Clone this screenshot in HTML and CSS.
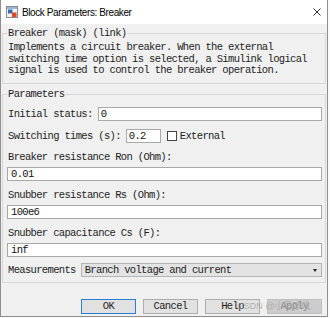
FILE: index.html
```html
<!DOCTYPE html>
<html lang="en">
<head>
    <meta charset="UTF-8">
    <meta name="viewport" content="width=device-width, initial-scale=1.0">
    <title>Block Parameters: Breaker</title>
    <link rel="stylesheet" href="styles.css">
</head>
<body>
    <div class="window">
        <div class="titlebar">
            <svg class="app-icon" width="12" height="12" viewBox="0 0 12 12">
                <rect x="0.5" y="0.5" width="11" height="11" fill="#f2f2f2" stroke="#8c8c8c"/>
                <rect x="1" y="1" width="10" height="2" fill="#9bb7d6"/>
                <rect x="2" y="3.5" width="4.5" height="4" fill="#2f6db5"/>
                <rect x="6" y="6.5" width="4.5" height="4.5" fill="#e2452a"/>
            </svg>
            <span class="title">Block Parameters: Breaker</span>
            <svg class="close" width="8" height="8" viewBox="0 0 8 8">
                <path d="M0.5 0.5 L7.5 7.5 M7.5 0.5 L0.5 7.5" stroke="#333" stroke-width="1"/>
            </svg>
        </div>

        <div class="content">
            <fieldset class="group">
                <legend>Breaker (mask) (link)</legend>
                <p class="desc">Implements a circuit breaker. When the external<br>switching time option is selected, a Simulink logical<br>signal is used to control the breaker operation.</p>
            </fieldset>

            <fieldset class="group params">
                <legend>Parameters</legend>

                <div class="row first">
                    <label for="status">Initial status:</label>
                    <input class="field grow" id="status" value="0" readonly>
                </div>

                <div class="row second">
                    <label for="times">Switching times (s):</label>
                    <input class="field short" id="times" value="0.2" readonly>
                    <span class="checkbox"></span>
                    <span class="check-label">External</span>
                </div>

                <label class="caption" for="ron">Breaker resistance Ron (Ohm):</label>
                <input class="field wide" id="ron" value="0.01" readonly>

                <label class="caption" for="rs">Snubber resistance Rs (Ohm):</label>
                <input class="field wide" id="rs" value="100e6" readonly>

                <label class="caption" for="cs">Snubber capacitance Cs (F):</label>
                <input class="field wide" id="cs" value="inf" readonly>

                <div class="row measure">
                    <label>Measurements</label>
                    <div class="select">Branch voltage and current<span class="arrow"></span></div>
                </div>
            </fieldset>

            <div class="buttons">
                <button class="btn default">OK</button>
                <button class="btn">Cancel</button>
                <button class="btn">Help</button>
                <button class="btn disabled">Apply</button>
            </div>

            <span class="watermark">CSDN @小马哆吼.</span>
        </div>
    </div>
</body>
</html>
```

FILE: styles.css
```css
body {
    margin: 0;
    background-color: #fafafa;
    font-family: 'Liberation Mono', 'DejaVu Sans Mono', monospace;
    font-size: 10.5px;
    letter-spacing: -0.66px;
    color: #1e1e1e;
}

.window {
    width: 328px;
    height: 317px;
    box-sizing: border-box;
    background-color: #f0f0f0;
    border: 1px solid #8e8e8e;
    border-top: none;
}

.titlebar {
    display: flex;
    align-items: center;
    height: 24px;
    padding-left: 5px;
    background-color: #fff;
}

.app-icon {
    flex: none;
}

.title {
    margin-left: 4px;
    font-family: 'Liberation Sans', Arial, sans-serif;
    font-size: 10px;
    letter-spacing: -0.4px;
    color: #000;
}

.close {
    margin-left: auto;
    margin-right: 6px;
}

.content {
    position: relative;
    padding-top: 3px;
}

.group {
    margin: 0 1px 0 1px;
    padding: 0 3px 6px 4px;
    min-width: 0;
    border: 1px solid #d8d8d8;
}

.group legend {
    padding: 0 1px;
    line-height: 13px;
}

.desc {
    margin: 2px 0 0 1px;
    line-height: 11.5px;
}

.params {
    margin-top: 4px;
    padding-bottom: 5px;
}

.row {
    display: flex;
    align-items: center;
    height: 14px;
    padding-left: 1px;
}

.row.first {
    margin-top: 6px;
}

.row.second {
    margin-top: 8px;
}

.row label {
    white-space: pre;
    margin-right: 5px;
}

.field {
    box-sizing: border-box;
    height: 14px;
    margin: 0;
    padding: 0 2px;
    border: 1px solid #a9a9a9;
    background-color: #fff;
    font-family: inherit;
    font-size: inherit;
    letter-spacing: inherit;
    color: #111;
    outline: none;
}

.grow {
    flex: 1;
    min-width: 0;
}

.short {
    width: 35px;
}

.wide {
    display: block;
    width: 100%;
    margin-top: 3px;
    padding: 0 3px;
}

.checkbox {
    width: 10px;
    height: 10px;
    box-sizing: border-box;
    margin-left: 6px;
    border: 1px solid #444;
    background-color: #fff;
}

.check-label {
    margin-left: 3px;
}

.caption {
    display: block;
    margin-top: 7px;
    padding-left: 1px;
    line-height: 14px;
}

.row.measure {
    margin-top: 6px;
}

.select {
    position: relative;
    flex: 1;
    height: 14px;
    box-sizing: border-box;
    padding-left: 3px;
    line-height: 12px;
    border: 1px solid #b4b4b4;
    background-color: #e3e3e3;
}

.arrow {
    position: absolute;
    right: 4px;
    top: 5px;
    border-left: 2.5px solid transparent;
    border-right: 2.5px solid transparent;
    border-top: 3px solid #222;
}

.buttons {
    display: flex;
    justify-content: flex-end;
    gap: 7px;
    margin-top: 16px;
    padding-right: 5px;
}

.btn {
    width: 55px;
    height: 15px;
    padding: 0;
    border: 1px solid #adadad;
    background-color: #e1e1e1;
    font-family: inherit;
    font-size: inherit;
    letter-spacing: inherit;
    color: #1e1e1e;
}

.btn.default {
    border-color: #2a7fd4;
}

.btn.disabled {
    background-color: #cccccc;
    border-color: #bfbfbf;
    color: #8a8a8a;
}

.watermark {
    position: absolute;
    right: 14px;
    bottom: 2px;
    font-family: 'Liberation Sans', 'Noto Sans CJK SC', sans-serif;
    font-size: 9px;
    letter-spacing: 0;
    color: rgba(160, 160, 160, 0.75);
}
```
